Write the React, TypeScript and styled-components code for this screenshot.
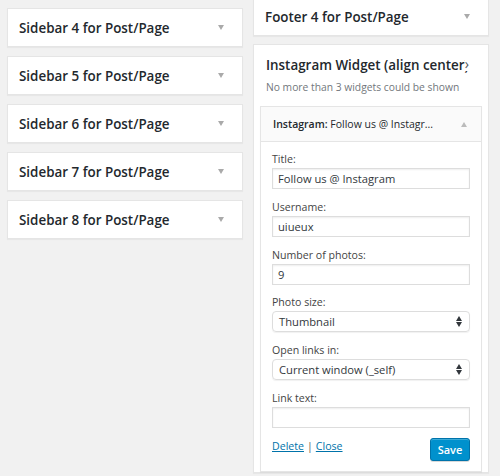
import React from "react";
import styled, { createGlobalStyle } from "styled-components";

const Global = createGlobalStyle`
  html, body { margin: 0; padding: 0; background: #f1f1f1; }
  body { font-family: "Open Sans", "Liberation Sans", sans-serif; color: #23282d; }
  * { box-sizing: border-box; }
`;

const Page = styled.div`
  display: flex;
  gap: 10px;
  padding-left: 7px;
  width: 500px;
  height: 476px;
  overflow: hidden;
`;

const Column = styled.div<{ $top: number; $gap: number }>`
  width: 236px;
  display: flex;
  flex-direction: column;
  gap: ${(p) => p.$gap}px;
  margin-top: ${(p) => p.$top}px;
`;

const Box = styled.div`
  background: #fff;
  border: 1px solid #e5e5e5;
  box-shadow: 0 1px 1px rgba(0, 0, 0, 0.04);
`;

const BoxHead = styled.div`
  height: 37px;
  display: flex;
  align-items: center;
  justify-content: space-between;
  padding: 0 18px 0 11px;
`;

const BoxTitle = styled.h2`
  margin: 0;
  font-size: 13.4px;
  font-weight: 600;
  color: #23282d;
  white-space: nowrap;
`;

const Arrow = styled.span<{ $up?: boolean; $color?: string }>`
  width: 0;
  height: 0;
  border-left: 3.5px solid transparent;
  border-right: 3.5px solid transparent;
  ${(p) =>
    p.$up
      ? `border-bottom: 5px solid ${p.$color || "#aaa"};`
      : `border-top: 5px solid ${p.$color || "#aaa"};`}
`;

const WidgetArea = styled(Box)`
  padding: 0 6px 0 6px;
  position: relative;
`;

const AreaTitle = styled.h2`
  margin: 0;
  padding: 10px 0 0 6px;
  font-size: 13.4px;
  line-height: 20px;
  font-weight: 600;
  white-space: nowrap;
  height: 30px;
  overflow: hidden;
`;

const AreaToggle = styled.span`
  position: absolute;
  right: 19px;
  top: 12px;
  color: #555;
  font-size: 14px;
  line-height: 1;
  background: #fff;
`;

const AreaDesc = styled.p`
  margin: 5px 0 0 6px;
  font-size: 10.3px;
  color: #72777c;
  line-height: 14px;
`;

const Widget = styled.div`
  margin-top: 12px;
  border: 1px solid #e5e5e5;
  background: #fff;
  box-shadow: 0 1px 1px rgba(0, 0, 0, 0.04);
`;

const WidgetHead = styled.div`
  height: 35px;
  background: #fafafa;
  border-bottom: 1px solid #e5e5e5;
  display: flex;
  align-items: center;
  justify-content: space-between;
  padding: 0 14px 0 12px;
  font-size: 10.5px;
  color: #23282d;
`;

const Strong = styled.span`
  font-weight: 600;
`;

const Form = styled.div`
  padding: 10px 11px 10px 11px;
  display: flex;
  flex-direction: column;
  gap: 10.8px;
`;

const Field = styled.div`
  display: flex;
  flex-direction: column;
  gap: 2px;
`;

const Label = styled.label`
  font-size: 10.6px;
  color: #444;
  line-height: 14px;
`;

const Input = styled.div`
  height: 21px;
  border: 1px solid #ddd;
  box-shadow: inset 0 1px 2px rgba(0, 0, 0, 0.07);
  padding: 0 5px;
  font-size: 11.2px;
  line-height: 19px;
  color: #32373c;
`;

const Select = styled.div`
  height: 21px;
  border: 1px solid #ddd;
  border-radius: 4px;
  box-shadow: 0 1px 1px rgba(0, 0, 0, 0.06);
  padding: 0 7px 0 6px;
  font-size: 11.2px;
  line-height: 19px;
  color: #32373c;
  display: flex;
  align-items: center;
  justify-content: space-between;
`;

const Spinner = styled.span`
  display: flex;
  flex-direction: column;
  gap: 1px;
`;

const Actions = styled.div`
  display: flex;
  justify-content: space-between;
  align-items: flex-start;
  margin-top: -1px;
`;

const Links = styled.div`
  font-size: 10.6px;
  color: #555;
  padding-top: 1px;
  display: flex;
  gap: 3px;
`;

const Link = styled.a`
  color: #0073aa;
  text-decoration: underline;
`;

const SaveButton = styled.button`
  width: 40px;
  height: 23px;
  background: #0091cd;
  border: 1px solid #0073aa;
  border-radius: 3px;
  color: #fff;
  font-family: inherit;
  font-size: 11px;
  font-weight: 600;
  padding: 0;
  box-shadow: inset 0 1px 0 rgba(120, 200, 230, 0.5), 0 1px 0 rgba(0, 0, 0, 0.15);
`;

const Updown = () => (
  <Spinner>
    <Arrow $up $color="#32373c" />
    <Arrow $color="#32373c" />
  </Spinner>
);

const sidebars = [4, 5, 6, 7, 8];

export default function App() {
  return (
    <>
      <Global />
      <Page>
        <Column $top={8} $gap={9}>
          {sidebars.map((n) => (
            <Box key={n}>
              <BoxHead>
                <BoxTitle>Sidebar {n} for Post/Page</BoxTitle>
                <Arrow />
              </BoxHead>
            </Box>
          ))}
        </Column>
        <Column $top={-3} $gap={8}>
          <Box>
            <BoxHead>
              <BoxTitle>Footer 4 for Post/Page</BoxTitle>
              <Arrow />
            </BoxHead>
          </Box>
          <WidgetArea>
            <AreaTitle>Instagram Widget (align center)</AreaTitle>
            <AreaToggle>›</AreaToggle>
            <AreaDesc>No more than 3 widgets could be shown</AreaDesc>
            <Widget>
              <WidgetHead>
                <span>
                  <Strong>Instagram:</Strong> Follow us @ Instagr...
                </span>
                <Arrow $up $color="#bbb" />
              </WidgetHead>
              <Form>
                <Field>
                  <Label>Title:</Label>
                  <Input>Follow us @ Instagram</Input>
                </Field>
                <Field>
                  <Label>Username:</Label>
                  <Input>uiueux</Input>
                </Field>
                <Field>
                  <Label>Number of photos:</Label>
                  <Input>9</Input>
                </Field>
                <Field>
                  <Label>Photo size:</Label>
                  <Select>
                    <span>Thumbnail</span>
                    <Updown />
                  </Select>
                </Field>
                <Field>
                  <Label>Open links in:</Label>
                  <Select>
                    <span>Current window (_self)</span>
                    <Updown />
                  </Select>
                </Field>
                <Field>
                  <Label>Link text:</Label>
                  <Input />
                </Field>
                <Actions>
                  <Links>
                    <Link>Delete</Link>|<Link>Close</Link>
                  </Links>
                  <SaveButton>Save</SaveButton>
                </Actions>
              </Form>
            </Widget>
          </WidgetArea>
        </Column>
      </Page>
    </>
  );
}
